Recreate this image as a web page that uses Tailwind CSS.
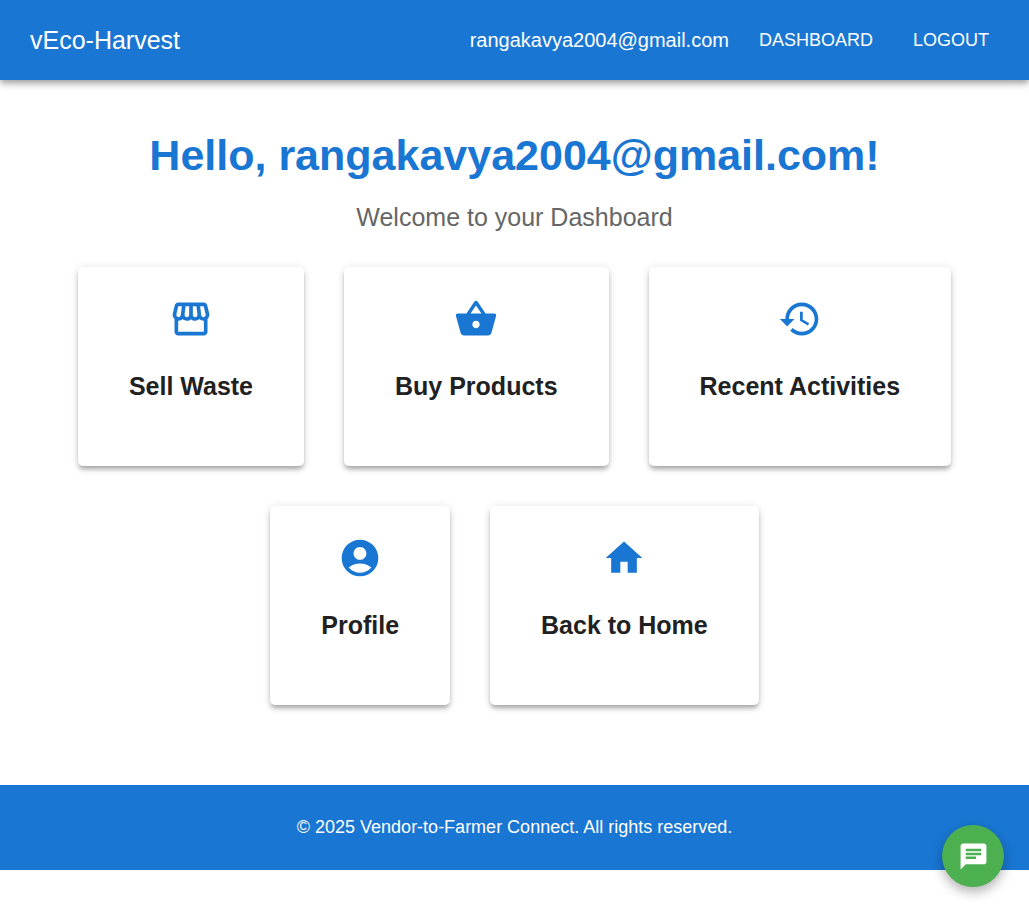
<!DOCTYPE html>
<html lang="en">
<head>
<meta charset="utf-8">
<meta name="viewport" content="width=device-width, initial-scale=1">
<title>vEco-Harvest</title>
<script src="https://cdn.jsdelivr.net/npm/@tailwindcss/browser@4"></script>
</head>
<body class="bg-white font-['Liberation_Sans',Arial,sans-serif] text-[#212121]">
<header class="flex min-h-20 items-center justify-between bg-[#1976d2] px-[30px] text-white shadow-[0_3px_5px_-1px_rgb(0_0_0/0.2),0_5px_6px_0_rgb(0_0_0/0.14),0_1px_12px_0_rgb(0_0_0/0.12)]">
  <div class="text-[25px] leading-10">vEco-Harvest</div>
  <nav class="flex items-center">
    <span class="mr-5 text-xl leading-[30px]">rangakavya2004@gmail.com</span>
    <a href="#" class="px-[10px] py-2 text-lg leading-[30px]">DASHBOARD</a>
    <button type="button" class="ml-5 px-[10px] py-2 text-lg leading-[30px]">LOGOUT</button>
  </nav>
</header>

<main class="px-[30px] pt-[50px] pb-20 text-center">
  <h1 class="text-[43px] leading-[50px] font-bold text-[#1976d2]">Hello, rangakavya2004@gmail.com!</h1>
  <p class="mt-[18px] text-[25px] leading-[38px] text-[#666666]">Welcome to your Dashboard</p>
  <div class="mt-[31px] flex flex-wrap justify-center gap-10">
    <a href="#" class="flex flex-col items-center gap-[25px] rounded-[5px] px-[51px] pt-[30px] pb-[60px] shadow-[0_4px_4px_-2px_rgb(0_0_0/0.2),0_4px_5px_0_rgb(0_0_0/0.14),0_1px_10px_0_rgb(0_0_0/0.12)]">
      <svg class="size-11 fill-[#1976d2]" viewBox="0 0 24 24" aria-hidden="true"><path d="m21.9 8.89-1.05-4.37c-.22-.9-1-1.52-1.91-1.52H5.05c-.9 0-1.69.63-1.9 1.52L2.1 8.89c-.24 1.02-.02 2.06.62 2.88.08.11.19.19.28.29V19c0 1.1.9 2 2 2h14c1.1 0 2-.9 2-2v-6.94c.09-.09.2-.18.28-.28.64-.82.87-1.87.62-2.89zm-2.99-3.9 1.05 4.37c.1.42.01.84-.25 1.17-.14.18-.44.47-.94.47-.61 0-1.14-.49-1.21-1.14L16.98 5l1.93-.01zM13 5h1.96l.54 4.52c.05.39-.07.78-.33 1.07-.22.26-.54.41-.95.41-.67 0-1.22-.59-1.22-1.31V5zM8.49 9.52 9.04 5H11v4.69c0 .72-.55 1.31-1.29 1.31-.34 0-.65-.15-.89-.41-.25-.29-.37-.68-.33-1.07zm-4.45-.16L5.05 5h1.97l-.58 4.86c-.08.65-.6 1.14-1.21 1.14-.49 0-.8-.29-.93-.47-.27-.32-.36-.75-.26-1.17zM5 19v-6.03c.08.01.15.03.23.03.87 0 1.66-.36 2.24-.95.6.6 1.4.95 2.31.95.87 0 1.65-.36 2.23-.93.59.57 1.39.93 2.29.93.84 0 1.64-.35 2.24-.95.58.59 1.37.95 2.24.95.08 0 .15-.02.23-.03V19H5z"/></svg>
      <h2 class="text-[25px] leading-10 font-bold">Sell Waste</h2>
    </a>
    <a href="#" class="flex flex-col items-center gap-[25px] rounded-[5px] px-[51px] pt-[30px] pb-[60px] shadow-[0_4px_4px_-2px_rgb(0_0_0/0.2),0_4px_5px_0_rgb(0_0_0/0.14),0_1px_10px_0_rgb(0_0_0/0.12)]">
      <svg class="size-11 fill-[#1976d2]" viewBox="0 0 24 24" aria-hidden="true"><path d="m17.21 9-4.38-6.56c-.19-.28-.51-.42-.83-.42-.32 0-.64.14-.83.43L6.79 9H2c-.55 0-1 .45-1 1 0 .09.01.18.04.27l2.54 9.27c.23.84 1 1.46 1.92 1.46h13c.92 0 1.69-.62 1.93-1.46l2.54-9.27L23 10c0-.55-.45-1-1-1h-4.79zM9 9l3-4.4L15 9H9zm3 8c-1.1 0-2-.9-2-2s.9-2 2-2 2 .9 2 2-.9 2-2 2z"/></svg>
      <h2 class="text-[25px] leading-10 font-bold">Buy Products</h2>
    </a>
    <a href="#" class="flex flex-col items-center gap-[25px] rounded-[5px] px-[51px] pt-[30px] pb-[60px] shadow-[0_4px_4px_-2px_rgb(0_0_0/0.2),0_4px_5px_0_rgb(0_0_0/0.14),0_1px_10px_0_rgb(0_0_0/0.12)]">
      <svg class="size-11 fill-[#1976d2]" viewBox="0 0 24 24" aria-hidden="true"><path d="M13 3c-4.97 0-9 4.03-9 9H1l3.89 3.89.07.14L9 12H6c0-3.87 3.13-7 7-7s7 3.13 7 7-3.13 7-7 7c-1.93 0-3.68-.79-4.94-2.06l-1.42 1.42C8.27 19.99 10.51 21 13 21c4.97 0 9-4.03 9-9s-4.03-9-9-9zm-1 5v5l4.28 2.54.72-1.21-3.5-2.08V8H12z"/></svg>
      <h2 class="text-[25px] leading-10 font-bold">Recent Activities</h2>
    </a>
    <a href="#" class="flex flex-col items-center gap-[25px] rounded-[5px] px-[51px] pt-[30px] pb-[60px] shadow-[0_4px_4px_-2px_rgb(0_0_0/0.2),0_4px_5px_0_rgb(0_0_0/0.14),0_1px_10px_0_rgb(0_0_0/0.12)]">
      <svg class="size-11 fill-[#1976d2]" viewBox="0 0 24 24" aria-hidden="true"><path d="M12 2C6.48 2 2 6.48 2 12s4.48 10 10 10 10-4.48 10-10S17.52 2 12 2zm0 4c1.93 0 3.5 1.57 3.5 3.5S13.93 13 12 13s-3.5-1.57-3.5-3.5S10.07 6 12 6zm0 14c-2.03 0-4.43-.82-6.14-2.88C7.55 15.8 9.68 15 12 15s4.45.8 6.14 2.12C16.43 19.18 14.03 20 12 20z"/></svg>
      <h2 class="text-[25px] leading-10 font-bold">Profile</h2>
    </a>
    <a href="#" class="flex flex-col items-center gap-[25px] rounded-[5px] px-[51px] pt-[30px] pb-[60px] shadow-[0_4px_4px_-2px_rgb(0_0_0/0.2),0_4px_5px_0_rgb(0_0_0/0.14),0_1px_10px_0_rgb(0_0_0/0.12)]">
      <svg class="size-11 fill-[#1976d2]" viewBox="0 0 24 24" aria-hidden="true"><path d="M10 20v-6h4v6h5v-8h3L12 3 2 12h3v8z"/></svg>
      <h2 class="text-[25px] leading-10 font-bold">Back to Home</h2>
    </a>
  </div>
</main>

<footer class="bg-[#1976d2] px-5 py-[30px] text-center text-lg leading-[25px] text-white">© 2025 Vendor-to-Farmer Connect. All rights reserved.</footer>

<button type="button" aria-label="Open chat" class="fixed right-[25px] bottom-6 flex size-[62px] items-center justify-center rounded-full bg-[#4caf50] shadow-[0_5px_12px_rgb(0_0_0/0.3)]">
  <svg class="size-[31px] fill-white" viewBox="0 0 24 24" aria-hidden="true"><path d="M20 2H4c-1.1 0-1.99.9-1.99 2L2 22l4-4h14c1.1 0 2-.9 2-2V4c0-1.1-.9-2-2-2zM6 9h12v2H6V9zm8 5H6v-2h8v2zm4-6H6V6h12v2z"/></svg>
</button>
</body>
</html>
